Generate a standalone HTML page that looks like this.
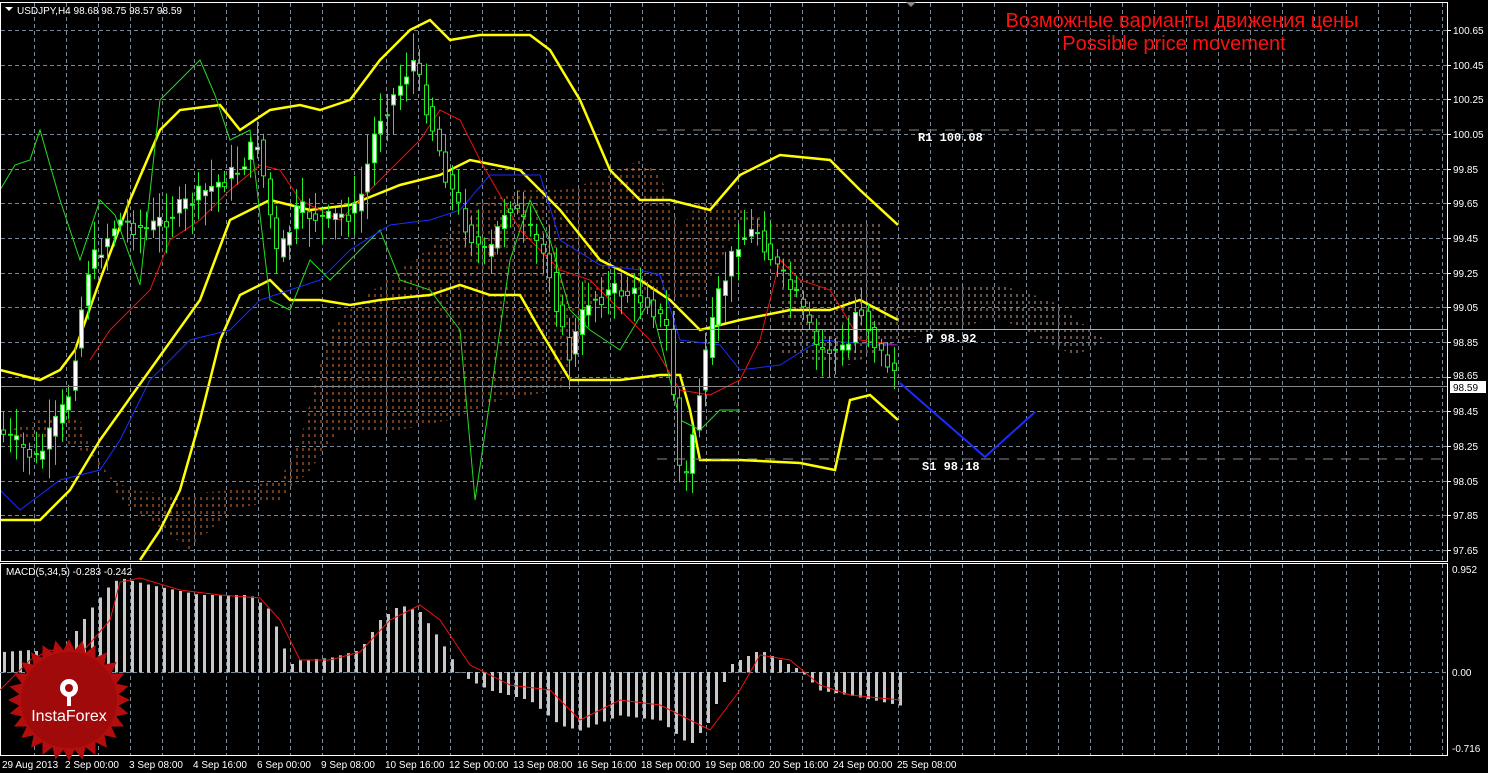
<!DOCTYPE html>
<html><head><meta charset="utf-8"><style>
html,body{margin:0;padding:0;background:#000;width:1488px;height:773px;overflow:hidden}
svg{display:block}
text{font-family:"Liberation Sans",sans-serif}
text.m{font-family:"Liberation Mono",monospace}
</style></head><body>
<svg id="s" width="1488" height="773" xmlns="http://www.w3.org/2000/svg">
<defs>
<pattern id="po" width="6" height="7" patternUnits="userSpaceOnUse"><line x1="3" y1="0" x2="3" y2="3" stroke="#d8743a" stroke-width="1"/></pattern>
<pattern id="pw" width="6" height="7" patternUnits="userSpaceOnUse"><line x1="3" y1="0" x2="3" y2="3" stroke="#c9a89a" stroke-width="1"/></pattern>
</defs>
<rect width="1488" height="773" fill="#000"/>
<g id="grid" stroke="#7a8796" stroke-dasharray="4,3" stroke-width="1"></g>
<polygon fill="url(#po)" points="10,430 40,420 80,420 100,470 130,490 180,495 230,490 280,480 300,440 330,330 360,300 400,270 440,240 480,200 520,190 560,190 600,180 640,160 660,175 680,230 700,200 740,210 780,222 780,232 740,222 700,300 680,300 640,290 600,290 560,390 500,400 450,420 400,430 340,430 310,470 280,500 230,510 190,550 150,520 120,500 100,460 60,440 20,440"/>
<polygon fill="url(#pw)" points="780,222 880,222 885,285 1000,285 1050,300 1105,340 1075,356 1000,318 900,340 850,365 780,355"/>
<g id="lines" fill="none"></g>
<g id="candles"></g>
<line x1="657" y1="130" x2="1448" y2="130" stroke="#888" stroke-dasharray="10,8"/>
<line x1="657" y1="459" x2="1448" y2="459" stroke="#888" stroke-dasharray="10,8"/>
<line x1="657" y1="329.5" x2="1448" y2="329.5" stroke="#e8b400"/>
<line x1="0" y1="386.5" x2="1448" y2="386.5" stroke="#888"/>
<text class="m" x="918" y="141" fill="#fff" font-size="12" font-weight="bold">R1 100.08</text>
<text class="m" x="926" y="342" fill="#fff" font-size="12" font-weight="bold">P 98.92</text>
<text class="m" x="922" y="470" fill="#fff" font-size="12" font-weight="bold">S1 98.18</text>
<polyline points="900,383 985,457 1035,412" fill="none" stroke="#1a2cff" stroke-width="2"/>
<text x="1182" y="27" fill="#ff1010" font-size="20" text-anchor="middle">Возможные варианты движения цены</text>
<text x="1174" y="50" fill="#ff1010" font-size="20" text-anchor="middle">Possible price movement</text>
<rect x="0.5" y="2.5" width="1447" height="559" fill="none" stroke="#fff"/>
<rect x="0.5" y="563.5" width="1447" height="192" fill="none" stroke="#fff"/>
<polygon points="5,7 13,7 9,11" fill="#fff"/>
<text x="17" y="14" fill="#fff" font-size="10">USDJPY,H4  98.68 98.75 98.57 98.59</text>
<polygon points="906,2 916,2 911,7" fill="#888"/>
<g id="rlab" fill="#fff" font-size="10"></g>
<rect x="1450" y="381" width="36" height="12" fill="#fff"/>
<text x="1453" y="391" fill="#000" font-size="10">98.59</text>
<text x="6" y="575" fill="#fff" font-size="10">MACD(5,34,5) -0.283 -0.242</text>
<text x="1452" y="573" fill="#fff" font-size="10">0.952</text>
<text x="1452" y="676" fill="#fff" font-size="10">0.00</text>
<text x="1452" y="752" fill="#fff" font-size="10">-0.716</text>
<line x1="0" y1="672.5" x2="1448" y2="672.5" stroke="#7a8796" stroke-dasharray="4,3"/>
<g id="macd"></g>
<g id="tlab" fill="#fff" font-size="10"></g>
<g transform="translate(69,700)">
<polygon id="star" fill="#b30d0d"/>
<circle r="48" fill="#a00a0a"/>
<g fill="#fff"><circle cy="-12" r="9"/><circle cy="-12" r="4" fill="#a00a0a"/><rect x="-2" y="-6" width="4" height="12"/></g>
<text y="21" fill="#fff" font-size="16" text-anchor="middle">InstaForex</text>
</g>
</svg>
<script>
(function(){
var NS="http://www.w3.org/2000/svg";
function el(p,t,a){var e=document.createElementNS(NS,t);for(var k in a)e.setAttribute(k,a[k]);document.getElementById(p).appendChild(e);return e;}
for(var x=34;x<1448;x+=32){el("grid","line",{x1:x+.5,y1:3,x2:x+.5,y2:561});el("grid","line",{x1:x+.5,y1:564,x2:x+.5,y2:755});}
var labs=["100.65","100.45","100.25","100.05","99.85","99.65","99.45","99.25","99.05","98.85","98.65","98.45","98.25","98.05","97.85","97.65"];
for(var i=0;i<16;i++){var y=Math.round(30+i*34.67);el("grid","line",{x1:1,y1:y+.5,x2:1447,y2:y+.5});
var t=el("rlab","text",{x:1453,y:y+(i==10?2:4)});t.textContent=labs[i];
el("rlab","line",{x1:1448,y1:y+.5,x2:1451,y2:y+.5,stroke:"#fff"});}
var tl=["29 Aug 2013","2 Sep 00:00","3 Sep 08:00","4 Sep 16:00","6 Sep 00:00","9 Sep 08:00","10 Sep 16:00","12 Sep 00:00","13 Sep 08:00","16 Sep 16:00","18 Sep 00:00","19 Sep 08:00","20 Sep 16:00","24 Sep 00:00","25 Sep 08:00"];
for(var i=0;i<tl.length;i++){var t=el("tlab","text",{x:i==0?2:1+i*64,y:768});t.textContent=tl[i];}
function pl(pts,c,w){el("lines","polyline",{points:pts,stroke:c,"stroke-width":w,fill:"none"});}
pl("0,370 40,380 60,370 75,350 100,280 130,200 160,130 180,110 220,105 240,130 270,110 300,105 320,110 350,100 380,60 410,30 430,20 450,40 480,35 530,35 550,50 580,100 610,170 640,200 670,200 690,205 710,210 740,175 780,155 830,160 860,190 898,225","#ffff00",2.5);
pl("0,520 40,520 70,490 100,440 150,370 200,300 230,220 270,200 310,210 350,205 400,185 440,175 470,160 520,170 560,210 600,260 640,280 670,300 700,330 740,320 790,310 830,310 860,300 898,320","#ffff00",2.5);
pl("140,560 160,530 180,490 200,420 220,340 240,295 270,280 290,300 320,300 350,305 380,300 430,295 460,285 490,295 520,295 540,330 570,380 620,380 660,375 680,375 690,410 700,460 740,460 800,463 835,470 850,400 870,395 898,420","#ffff00",2.5);
pl("0,190 15,165 30,160 40,130 60,200 80,260 100,200 115,215 140,285 160,100 180,80 200,60 215,95 230,140 250,130 270,300 290,310 310,260 330,280 360,250 380,230 400,280 430,290 460,330 475,500 490,400 510,260 530,200 550,240 570,310 590,330 620,350 650,300 680,420 700,430 720,410 740,410","#22dd22",1);
pl("90,360 110,330 150,290 170,240 200,220 230,190 260,165 280,170 300,200 320,210 340,220 360,200 390,170 420,140 440,110 460,120 480,160 520,230 560,270 590,280 620,310 650,340 680,390 710,395 740,380 760,340 780,260 800,280 830,290 860,340 898,345","#ee1111",1);
pl("0,490 20,510 60,480 100,470 120,440 150,380 190,340 230,330 260,300 290,290 320,280 350,250 390,225 430,220 460,210 490,175 540,175 560,240 600,265 640,270 660,275 680,340 720,345 740,370 780,365 820,340 880,345 898,345","#1a2cff",1);
function interp(k,x){for(var i=0;i<k.length-1;i++){if(x>=k[i][0]&&x<=k[i+1][0]){var f=(x-k[i][0])/(k[i+1][0]-k[i][0]);return k[i][1]+f*(k[i+1][1]-k[i][1]);}}return k[k.length-1][1];}
var P=[[0,430],[40,460],[70,400],[90,270],[120,220],[150,230],[180,210],[210,190],[240,170],[260,140],[280,260],[300,210],[330,220],[360,210],[380,120],[400,90],[415,60],[430,110],[450,180],[470,230],[490,260],[510,200],[530,230],[550,260],[570,360],[590,300],[620,290],[650,300],[670,330],[685,500],[700,400],[720,300],[740,240],[760,230],[780,270],[800,300],[820,350],[850,350],[860,300],[880,350],[900,375]];
var seed=7;function rnd(){seed=(seed*9301+49297)%233280;return seed/233280;}
for(var x=3;x<=898;x+=6.5){var xx=Math.round(x);var o=interp(P,x-3),c=interp(P,x+3)+(rnd()-.5)*20;var tp=Math.min(o,c),bt=Math.max(o,c);var hi=tp-5-rnd()*25,lo=bt+5+rnd()*25;
el("candles","line",{x1:xx+.5,y1:hi,x2:xx+.5,y2:lo,stroke:"#22ee22"});
el("candles","rect",{x:xx-1.5,y:tp,width:4,height:Math.max(1,bt-tp),fill:c<o?"#fff":"#000",stroke:"#22ee22"});}
var M=[[3,652],[30,650],[60,655],[80,625],[90,610],[110,585],[120,578],[150,585],[200,595],[250,595],[270,610],[290,665],[300,660],[330,658],[360,650],[380,620],[400,605],[420,612],[440,640],[460,672],[470,680],[490,690],[530,700],[560,725],[580,730],[620,715],[660,720],[690,745],[710,720],[730,665],[760,650],[780,660],[800,670],[820,690],[850,695],[900,705]];
for(var x=4;x<=900;x+=8){var y=interp(M,x);el("macd","rect",{x:x-1,y:Math.min(y,672),width:3,height:Math.abs(y-672)+.5,fill:"#c8c8c8"});}
el("macd","polyline",{points:"0,690 30,660 50,650 80,655 110,620 120,582 140,578 180,590 220,595 260,598 280,620 300,660 330,660 360,652 390,620 420,605 440,620 470,665 510,685 550,690 580,720 620,700 660,705 690,720 710,730 740,690 760,655 790,660 820,685 850,695 900,700",fill:"none",stroke:"#ee1111"});
var s="";for(var i=0;i<56;i++){var a=i*Math.PI/28,r=i%2?50:61;s+=(r*Math.cos(a)).toFixed(1)+","+(r*Math.sin(a)).toFixed(1)+" ";}
document.getElementById("star").setAttribute("points",s);
})();
</script>
</body></html>
